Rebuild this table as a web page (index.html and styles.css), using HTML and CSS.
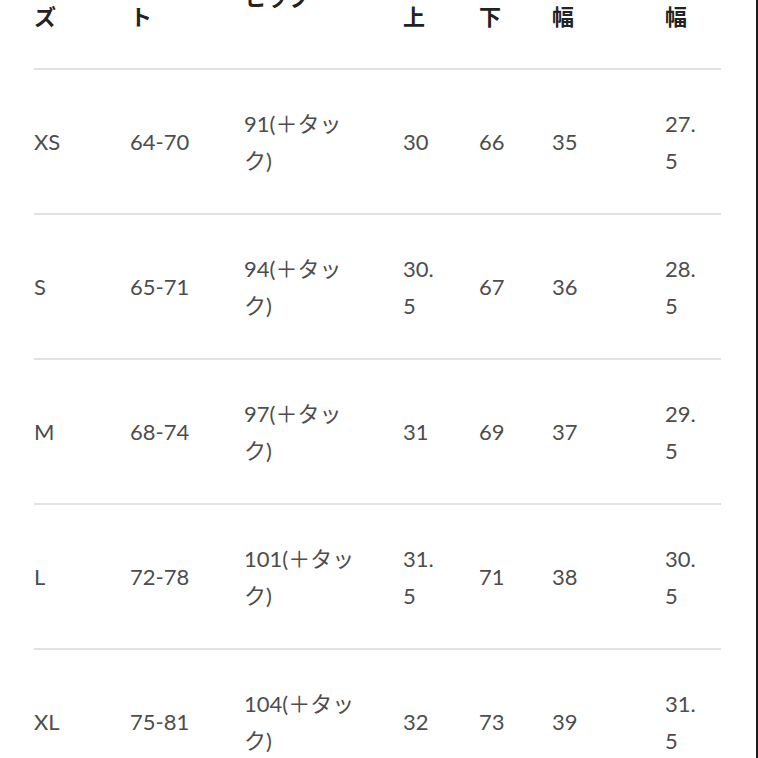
FILE: index.html
```html
<!DOCTYPE html>
<html lang="ja">
<head>
<meta charset="utf-8">
<link rel="stylesheet" href="styles.css">
</head>
<body>
<div class="page">
  <div class="table">
    <div class="row head">
      <div class="cell">サイ<br>ズ</div>
      <div class="cell">ウエス<br>ト</div>
      <div class="cell">ヒップ</div>
      <div class="cell">股<br>上</div>
      <div class="cell">股<br>下</div>
      <div class="cell">渡り<br>幅</div>
      <div class="cell">裾<br>幅</div>
    </div>
    <div class="row">
      <div class="cell">XS</div>
      <div class="cell">64-70</div>
      <div class="cell">91(＋タッ<br>ク)</div>
      <div class="cell">30</div>
      <div class="cell">66</div>
      <div class="cell">35</div>
      <div class="cell">27.<br>5</div>
    </div>
    <div class="row">
      <div class="cell">S</div>
      <div class="cell">65-71</div>
      <div class="cell">94(＋タッ<br>ク)</div>
      <div class="cell">30.<br>5</div>
      <div class="cell">67</div>
      <div class="cell">36</div>
      <div class="cell">28.<br>5</div>
    </div>
    <div class="row">
      <div class="cell">M</div>
      <div class="cell">68-74</div>
      <div class="cell">97(＋タッ<br>ク)</div>
      <div class="cell">31</div>
      <div class="cell">69</div>
      <div class="cell">37</div>
      <div class="cell">29.<br>5</div>
    </div>
    <div class="row">
      <div class="cell">L</div>
      <div class="cell">72-78</div>
      <div class="cell">101(＋タッ<br>ク)</div>
      <div class="cell">31.<br>5</div>
      <div class="cell">71</div>
      <div class="cell">38</div>
      <div class="cell">30.<br>5</div>
    </div>
    <div class="row">
      <div class="cell">XL</div>
      <div class="cell">75-81</div>
      <div class="cell">104(＋タッ<br>ク)</div>
      <div class="cell">32</div>
      <div class="cell">73</div>
      <div class="cell">39</div>
      <div class="cell">31.<br>5</div>
    </div>
  </div>
</div>
</body>
</html>
```

FILE: styles.css
```css
html, body {
  margin: 0;
  padding: 0;
  background: #ffffff;
}
.page {
  width: 756px;
  height: 758px;
  overflow: hidden;
  border-right: 2px solid #1c1c1c;
  background: #ffffff;
}
.table {
  margin-top: -75px;
  margin-left: 34px;
  width: 687px;
  font-family: Lato, "Noto Sans CJK JP", sans-serif;
  font-size: 22px;
  line-height: 37px;
  color: #4d4d4d;
}
.row {
  display: grid;
  grid-template-columns: 96px 114px 159px 76px 73px 113px 56px;
  height: 143px;
  align-items: center;
  border-bottom: 2px solid #e2e2e2;
}
.head {
  font-family: "Noto Sans CJK JP", sans-serif;
  font-weight: 700;
  color: #222222;
}
.cell {
  white-space: nowrap;
}
```
